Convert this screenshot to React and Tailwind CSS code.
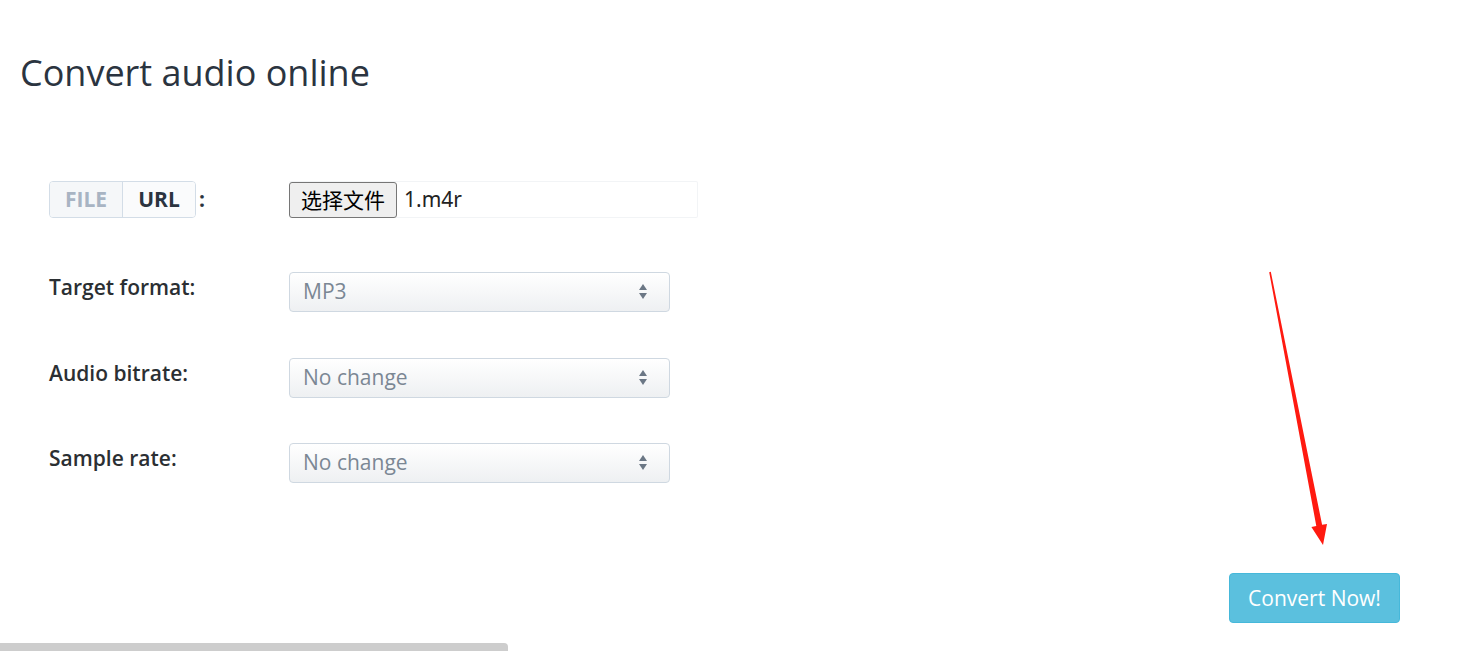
import React from 'react'

const font = { fontFamily: '"Open Sans", "Noto Sans", sans-serif' }

function Arrows() {
  return (
    <svg width="10" height="20" viewBox="0 0 10 20" className="shrink-0">
      <path d="M5 2 L9 8 L1 8 Z" fill="#6b7785" />
      <path d="M1 11 L9 11 L5 17 Z" fill="#6b7785" />
    </svg>
  )
}

function SelectBox({ value }) {
  return (
    <div className="w-[381px] h-[40px] flex items-center justify-between pl-[13px] pr-[21px] rounded-[4px] border border-[#cfd8e1] bg-gradient-to-b from-white to-[#eef0f2] text-[21px] text-[#7b8794]">
      <span>{value}</span>
      <Arrows />
    </div>
  )
}

function Row({ label, children }) {
  return (
    <div className="flex items-start">
      <div className="w-[240px] text-[21px] font-semibold text-[#2b2f33] leading-[30px]">{label}</div>
      {children}
    </div>
  )
}

export default function App() {
  return (
    <div className="relative w-[1482px] h-[651px] overflow-hidden bg-white" style={font}>
      <h1 className="pl-[20px] pt-[50px] text-[36px] leading-[46px] text-[#2b3440] font-normal">Convert audio online</h1>

      <div className="pl-[49px] pt-[85px] flex flex-col">
        <div className="flex items-center h-[37px]">
          <div className="w-[240px] flex items-center">
            <div className="flex h-[37px] rounded-[4px] border border-[#d3dde7] overflow-hidden text-[21px] font-bold">
              <div className="w-[73px] flex items-center justify-center bg-[#f5f7f9] text-[#a8b4c3] border-r border-[#d3dde7]">FILE</div>
              <div className="w-[72px] flex items-center justify-center bg-[#fafbfc] text-[#2b3440]">URL</div>
            </div>
            <span className="ml-[3px] text-[21px] font-bold text-[#2b3440]">:</span>
          </div>
          <div className="w-[409px] h-[37px] flex items-center border-y border-r border-[#f2f4f6] rounded-[2px]">
            <button className="h-[36px] w-[108px] border border-[#767676] rounded-[3px] bg-[#efefef] text-[21px] text-black leading-none" style={{ fontFamily: '"Noto Sans CJK SC", sans-serif' }}>选择文件</button>
            <span className="ml-[7px] text-[21px] text-[#222]" style={{ fontFamily: '"Noto Sans", sans-serif' }}>1.m4r</span>
          </div>
        </div>

        <div className="mt-[54px] flex flex-col gap-[45.5px]">
          <Row label="Target format:"><SelectBox value="MP3" /></Row>
          <Row label="Audio bitrate:"><SelectBox value="No change" /></Row>
          <Row label="Sample rate:"><SelectBox value="No change" /></Row>
        </div>
      </div>

      <div className="flex justify-end pr-[82px] mt-[90px]">
        <button className="w-[171px] h-[50px] pt-[1px] rounded-[4px] bg-[#5bc0de] border border-[#46b8da] text-white text-[21px]">Convert Now!</button>
      </div>

      <svg className="absolute left-[1260px] top-[268px]" width="80" height="285" viewBox="0 0 80 285">
        <path d="M9.2 4.15 L10.8 3.85 L62.1 256.8 L67 255.9 L63 277 L51.4 258.9 L56.3 258 Z" fill="#ff1a10" />
      </svg>

      <div className="absolute left-0 bottom-0 w-[508px] h-[8px] bg-[#cdcdcd] rounded-tr-[4px]" />
    </div>
  )
}
